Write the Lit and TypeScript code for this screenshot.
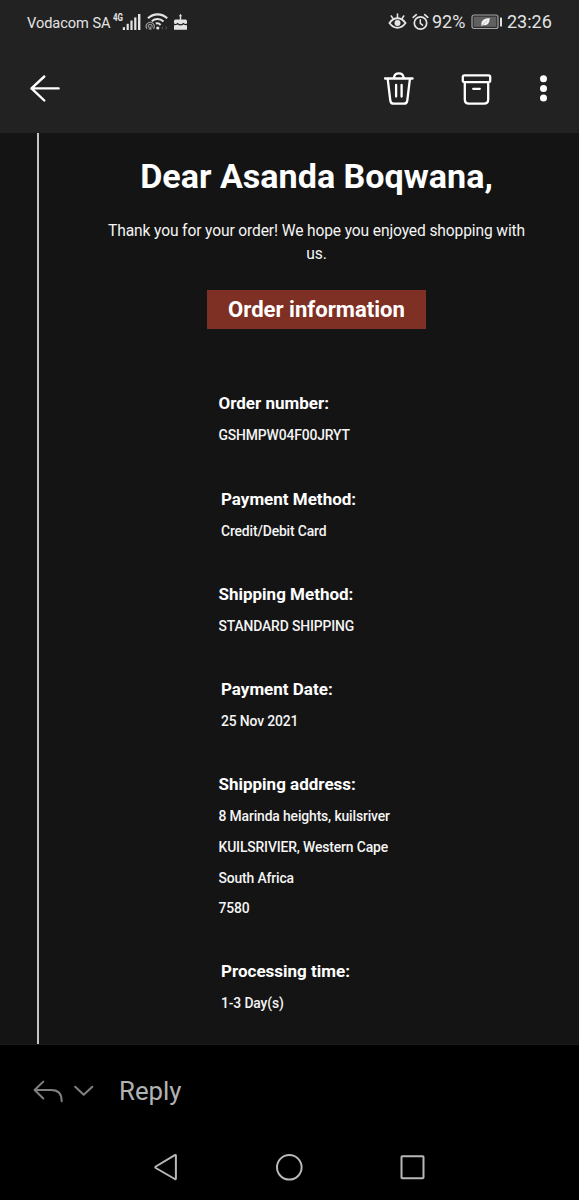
import { LitElement, html, css } from "lit";
import { customElement } from "lit/decorators.js";
import { classMap } from "lit/directives/class-map.js";

interface Detail {
  label: string;
  lines: string[];
  inset?: boolean;
}

const DETAILS: Detail[] = [
  { label: "Order number:", lines: ["GSHMPW04F00JRYT"] },
  { label: "Payment Method:", lines: ["Credit/Debit Card"], inset: true },
  { label: "Shipping Method:", lines: ["STANDARD SHIPPING"] },
  { label: "Payment Date:", lines: ["25 Nov 2021"], inset: true },
  {
    label: "Shipping address:",
    lines: ["8 Marinda heights, kuilsriver", "KUILSRIVIER, Western Cape", "South Africa", "7580"],
  },
  { label: "Processing time:", lines: ["1-3 Day(s)"], inset: true },
];

@customElement("status-bar")
class StatusBar extends LitElement {
  static styles = css`
    :host { display: flex; height: 45px; box-sizing: border-box; padding: 0 27px; justify-content: space-between; color: #e4e4e4; }
    .group { display: flex; align-items: center; height: 43px; }
    svg { display: block; flex: none; }
    .carrier { font-size: 14.6px; letter-spacing: -0.05px; width: 86px; white-space: nowrap; padding-top: 2px; }
    .net { font-size: 10px; font-weight: 700; width: 10px; line-height: 10px; margin-bottom: 7px; white-space: nowrap; transform: scaleX(0.8); transform-origin: left; }
    .signal { margin-left: -1px; }
    .wifi { margin-left: 4px; }
    .cake { margin: 1px 0 0 5px; }
    .alarm { margin-left: 5px; }
    .pct { font-size: 18px; margin-left: 3px; width: 39px; white-space: nowrap; }
    .time { font-size: 18px; margin-left: 4px; width: 45px; white-space: nowrap; }
  `;
  render() {
    return html`
      <div class="group">
        <span class="carrier">Vodacom SA</span>
        <span class="net">4G</span>
        <svg class="signal" width="19" height="18" viewBox="0 0 19 18" fill="#e4e4e4">
          <rect x="0.8" y="14.2" width="2.2" height="2.8" /><rect x="4.6" y="10.8" width="2.2" height="6.2" />
          <rect x="8.4" y="7.5" width="2.2" height="9.5" /><rect x="12.2" y="4.4" width="2.2" height="12.6" />
          <rect x="16" y="1" width="2.4" height="16" />
        </svg>
        <svg class="wifi" width="23" height="19" viewBox="0 0 23 19" fill="none" stroke="#e4e4e4" stroke-linecap="butt">
          <path d="M3 6.300C8.300 1 16.900 1 22.200 6.300" stroke-width="2.200" />
          <path d="M6.800 9.300C10.200 6.300 15 6.300 18.500 9.500" stroke-width="2.100" />
          <path d="M10.800 11.500Q13.600 10.600 15.600 13" stroke-width="2" />
          <circle cx="12.800" cy="16" r="1.600" fill="#e4e4e4" stroke="none" />
          <g stroke="#a0a0a0" stroke-width="1.100">
            <path d="M2 16.800A4 4 0 1 1 8.400 16.800" /><path d="M3.600 15.500A2 2 0 1 1 6.800 15.500" />
            <path d="M5.200 14.300L4 17.300H6.400Z" fill="#a0a0a0" stroke-width=".5" />
          </g>
          <path d="M18 14.600L16.800 15.900L18 17.200M20.600 14.600L21.800 15.900L20.600 17.200" stroke="#606060" stroke-width="1" />
        </svg>
        <svg class="cake" width="15" height="18" viewBox="0 0 15 18" fill="#e4e4e4">
          <path d="M7.500.8L8.600 2.400Q8.900 3.900 7.500 4.100Q6.100 3.900 6.400 2.400Z" />
          <rect x="6.800" y="4" width="1.400" height="3" />
          <path d="M2.500 6.500H12.500Q14 6.500 14 8V9.800Q14 11 12.700 11Q11.500 11 10.500 9.800Q9.300 11.200 7.500 11.200Q5.700 11.200 4.500 9.800Q3.500 11 2.300 11Q1 11 1 9.800V8Q1 6.500 2.500 6.500Z" />
          <path d="M1 12.200Q3 12.500 4.500 11.500Q7.500 13.300 10.500 11.500Q12 12.500 14 12.200V16.800H1Z" />
        </svg>
      </div>
      <div class="group">
        <svg width="19" height="19" viewBox="0 0 19 19" fill="none" stroke="#e4e4e4" stroke-width="1.900" stroke-linecap="round">
          <path d="M1.500 11Q5 6.300 9.500 6.300T17.500 11Q14 15.800 9.500 15.800T1.500 11Z" />
          <circle cx="9.500" cy="11" r="3" fill="#e4e4e4" stroke="none" />
          <path d="M9.500 5.500V2M5 6.600L3.300 4M14 6.600L15.700 4" stroke-width="1.600" />
        </svg>
        <svg class="alarm" width="17" height="18" viewBox="0 0 17 18" fill="none" stroke="#e4e4e4" stroke-width="1.700" stroke-linecap="round">
          <circle cx="8.500" cy="10" r="6.200" /><path d="M1.200 4.300L4.300 1.700M15.800 4.300L12.700 1.700" />
          <path d="M8.300 6.800V10.300L10.600 12.200" stroke-width="1.500" />
        </svg>
        <span class="pct">92%</span>
        <svg width="32" height="16" viewBox="0 0 32 16">
          <rect x="1" y="1" width="26" height="13.500" rx="2" fill="#2b2b2b" stroke="#a5a5a5" stroke-width="1.200" />
          <rect x="2.700" y="2.700" width="22.600" height="10.100" fill="#606060" />
          <path d="M10.600 12.200Q9.500 7.500 12.800 5.400Q14.500 4.200 18.700 4Q18.800 8.800 16.200 10.600Q14.300 11.800 12 11L10.600 12.500Z" fill="#f2f2f2" />
          <path d="M11.500 11L16 6.500" stroke="#8a8a8a" stroke-width=".5" />
          <rect x="29" y="3.500" width="2" height="9" rx=".6" fill="#e0e0e0" />
        </svg>
        <span class="time">23:26</span>
      </div>
    `;
  }
}

@customElement("app-root")
class AppRoot extends LitElement {
  static styles = css`
    :host { display: flex; flex-direction: column; height: 1200px; overflow: hidden; background: #000; font-family: Roboto, "Liberation Sans", sans-serif; color: #fff; }
    svg { display: block; flex: none; }
    .top { background: #222; height: 133px; flex: none; }
    .actions { display: flex; align-items: flex-start; height: 88px; box-sizing: border-box; padding: 26px 30px 0 29px; }
    .spacer { flex: 1; }
    .bin { margin-right: 46px; }
    .box { margin-right: 46px; }
    .mail { background: #141414; height: 912px; flex: none; display: flex; box-sizing: border-box; padding-left: 37px; border-bottom: 1px solid #1b1b1b; }
    .rule { width: 2px; background: #c6c6c6; flex: none; }
    .content { flex: 1; display: flex; flex-direction: column; padding: 21px 23px 0 38px; }
    h1 { margin: 0; font-size: 34.1px; line-height: 44px; font-weight: 700; text-align: center; white-space: nowrap; }
    .thanks { margin: 22px 0 0; font-size: 15.6px; letter-spacing: -0.13px; line-height: 23px; text-align: center; padding: 0 28px; color: #f4f4f4; }
    .tag { align-self: center; margin-top: 24px; background: #7f3024; width: 219.5px; height: 39px; line-height: 39px; font-size: 22.1px; font-weight: 700; text-align: center; white-space: nowrap; }
    .details { display: flex; flex-direction: column; gap: 33.2px; margin: 59.4px 0 0 141.5px; }
    .inset { padding-left: 2.5px; }
    .label { font-size: 17px; line-height: 31px; font-weight: 700; white-space: nowrap; }
    .line { font-size: 13.9px; letter-spacing: -0.14px; line-height: 30.7px; font-weight: 500; color: #f4f4f4; white-space: nowrap; padding-top: 1px; margin-bottom: -1px; }
    .line.single { line-height: 31px; }
    .reply { height: 91px; flex: none; display: flex; align-items: center; padding-left: 33px; }
    .chev { margin-left: 10px; }
    .word { margin-left: 25px; font-size: 25.8px; line-height: 30px; color: #b2b2b2; }
    .nav { display: flex; justify-content: space-between; padding: 17px 153px 0 152px; }
  `;

  private detail(d: Detail) {
    const single = d.lines.length === 1;
    return html`<div class=${classMap({ detail: true, inset: !!d.inset })}>
      <div class="label">${d.label}</div>
      ${d.lines.map((l) => html`<div class=${classMap({ line: true, single })}>${l}</div>`)}
    </div>`;
  }

  render() {
    return html`
      <header class="top">
        <status-bar></status-bar>
        <div class="actions">
          <svg width="32" height="34" viewBox="0 0 32 34" fill="none" stroke="#fff" stroke-width="2.400" stroke-linecap="round" stroke-linejoin="round">
            <path d="M15.300 5.500L2.500 17.400L15.300 29.500M2.500 17.400H29.600" />
          </svg>
          <span class="spacer"></span>
          <svg class="bin" width="32" height="36" viewBox="0 0 32 36" fill="none" stroke="#fff" stroke-width="2.300" stroke-linecap="round" stroke-linejoin="round">
            <path d="M2 7.500H29.600M11 7.300V6.500Q11.500 2.300 15.800 2.300T20.600 6.500V7.300M4.700 7.800L7.300 29.500Q7.700 32.700 10.800 32.700H20.800Q23.900 32.700 24.300 29.500L26.900 7.800M13.100 14V25.500M18.600 14V25.500" />
          </svg>
          <svg class="box" width="31" height="36" viewBox="0 0 31 36" fill="none" stroke="#fff" stroke-width="2.300" stroke-linecap="round" stroke-linejoin="round">
            <rect x="1.800" y="4.400" width="27.400" height="6.700" rx="1.600" />
            <path d="M3.800 11.300V28.500Q3.800 32.700 8 32.700H23Q27.200 32.700 27.200 28.500V11.300M12.200 17.800H18.800" />
          </svg>
          <svg width="11" height="34" viewBox="0 0 11 34" fill="#fff">
            <circle cx="5.500" cy="7.800" r="3.500" /><circle cx="5.500" cy="17.400" r="3.500" /><circle cx="5.500" cy="27" r="3.500" />
          </svg>
        </div>
      </header>
      <main class="mail">
        <div class="rule"></div>
        <div class="content">
          <h1>Dear Asanda Boqwana,</h1>
          <p class="thanks">Thank you for your order! We hope you enjoyed shopping with us.</p>
          <div class="tag">Order information</div>
          <div class="details">${DETAILS.map((d) => this.detail(d))}</div>
        </div>
      </main>
      <div class="reply">
        <svg width="31" height="24" viewBox="0 0 31 24" fill="none" stroke="#808080" stroke-width="2" stroke-linecap="round" stroke-linejoin="round">
          <path d="M10.300 2.600L1.600 11L10.300 19.500M1.600 11H18.500C25.500 11 28.700 15 28.700 22.300" />
        </svg>
        <svg class="chev" width="20" height="12" viewBox="0 0 20 12" fill="none" stroke="#808080" stroke-width="2" stroke-linecap="round" stroke-linejoin="round">
          <path d="M1.200 1.700L9.700 9.800L18.300 1.700" />
        </svg>
        <span class="word">Reply</span>
      </div>
      <nav class="nav">
        <svg width="27" height="28" viewBox="0 0 27 28" fill="none" stroke="#b8b8b8" stroke-width="2" stroke-linejoin="round">
          <path d="M23.900 2.600V25.500Q23.800 26.500 22.800 26L3.800 15Q2.700 14.300 3.800 13.500L22.800 2.200Q23.800 1.700 23.900 2.600Z" />
        </svg>
        <svg width="28" height="28" viewBox="0 0 28 28" fill="none" stroke="#b8b8b8" stroke-width="2"><circle cx="14.300" cy="14.300" r="12.300" /></svg>
        <svg width="27" height="28" viewBox="0 0 27 28" fill="none" stroke="#b8b8b8" stroke-width="2"><rect x="2.500" y="3.300" width="22" height="22" rx=".8" /></svg>
      </nav>
    `;
  }
}
